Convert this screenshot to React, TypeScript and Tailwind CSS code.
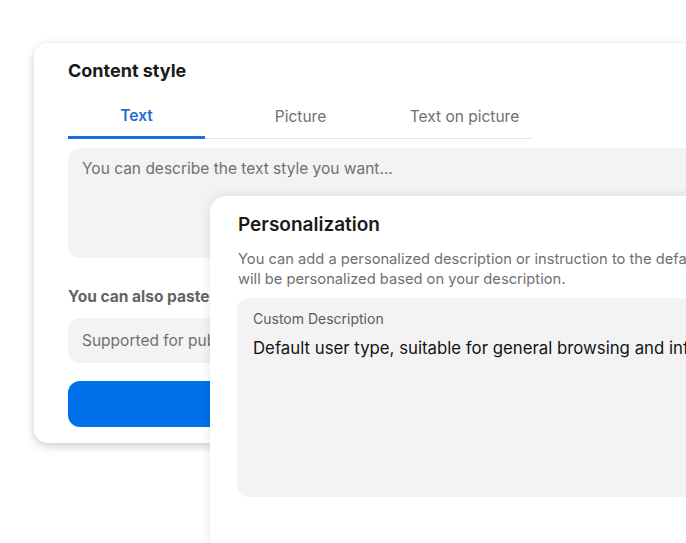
import React from 'react'

const tabs = ['Text', 'Picture', 'Text on picture']

function ContentStyleCard() {
  return (
    <div className="ml-[34px] mt-[43px] w-[760px] rounded-[14px] bg-white px-[34px] pb-[16px] pt-[16px] shadow-[0_3px_10px_rgba(0,0,0,0.2)]">
      <h2 className="text-[18px] font-bold leading-[24px] text-[#1a1a1a]">Content style</h2>

      <div className="mt-3 flex w-[465px] justify-between border-b border-[#e8e8e8]">
        {tabs.map((tab, i) =>
          i === 0 ? (
            <div
              key={tab}
              className="-mb-px flex h-[44px] w-[137px] items-center justify-center border-b-[3px] border-[#1b6fd6] text-[15.5px] font-semibold text-[#1b6fd6]"
            >
              {tab}
            </div>
          ) : (
            <div key={tab} className="flex h-[43px] w-[137px] items-center justify-center text-[15.5px] text-[#6f6f6f]">
              {tab}
            </div>
          )
        )}
      </div>

      <div className="mt-[9px] h-[110px] rounded-[12px] bg-[#f3f3f3] px-[14px] pt-[9px] text-[15.5px] leading-[24px] text-[#707070]">
        You can describe the text style you want...
      </div>

      <p className="mt-[27px] text-[15.5px] font-bold leading-[24px] text-[#646464]">
        You can also paste a link to generate content
      </p>

      <div className="mt-[9px] flex h-[45px] items-center rounded-[12px] bg-[#f3f3f3] px-[14px] text-[15.5px] text-[#707070]">
        Supported for public links such as articles and posts
      </div>

      <button className="mt-[18px] flex h-[46px] w-full items-center justify-center rounded-[12px] bg-[#0070eb] text-[16px] font-semibold text-white">
        Generate
      </button>
    </div>
  )
}

function PersonalizationCard() {
  return (
    <div className="absolute left-[210px] top-[196px] h-[400px] w-[540px] rounded-[16px] bg-white pl-[28px] pt-[15px] shadow-[0_0_12px_rgba(0,0,0,0.1)]">
      <h2 className="text-[19px] font-semibold leading-[28px] text-[#1a1a1a]">Personalization</h2>
      <p className="mt-[10px] whitespace-nowrap text-[14.7px] leading-[20px] text-[#6f6f6f]">
        <span className="block">You can add a personalized description or instruction to the default user type, and the content</span>
        <span className="block">will be personalized based on your description.</span>
      </p>
      <div className="-ml-px mt-[9px] h-[199px] rounded-[12px] bg-[#f3f3f3] px-[16px] pt-[11px]">
        <div className="text-[14px] leading-[20px] text-[#5c5c5c]">Custom Description</div>
        <div className="mt-[7px] whitespace-nowrap text-[16.8px] leading-[24px] text-[#141414]">
          Default user type, suitable for general browsing and information reading.
        </div>
      </div>
    </div>
  )
}

export default function App() {
  return (
    <div className="relative h-[543px] w-[686px] overflow-hidden bg-white font-['Inter',sans-serif]">
      <ContentStyleCard />
      <PersonalizationCard />
    </div>
  )
}
